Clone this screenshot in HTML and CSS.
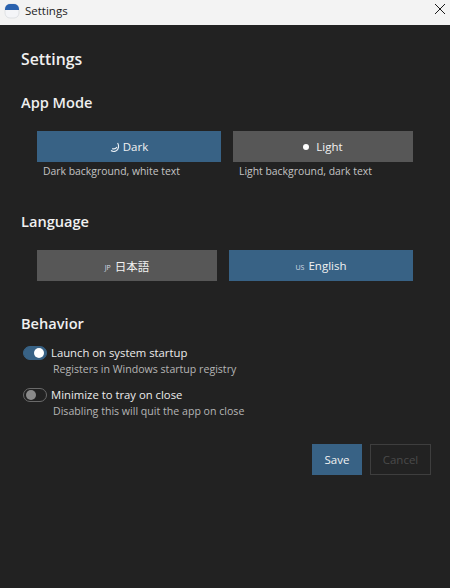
FILE: index.html
```html
<!DOCTYPE html>
<html lang="en">

<head>
    <meta charset="UTF-8">
    <title>Settings</title>
    <link rel="stylesheet" href="styles.css">
</head>

<body>

    <div class="titlebar">
        <svg class="app-icon" width="16" height="16" viewBox="0 0 16 16">
            <rect x="1" y="1" width="14" height="14" rx="5" fill="#f4f5f8" stroke="#c9ccd3" stroke-width="0.5"/>
            <path d="M1 7V6a5 5 0 0 1 5-5h4a5 5 0 0 1 5 5v1z" fill="#2a62ae"/>
        </svg>
        <span class="titlebar-text">Settings</span>
        <svg class="close-icon" width="12" height="12" viewBox="0 0 12 12">
            <path d="M1 1L11 11M11 1L1 11" stroke="#1a1a1a" stroke-width="1" fill="none"/>
        </svg>
    </div>

    <div class="content">
        <h1>Settings</h1>

        <h2 class="mode-title">App Mode</h2>
        <div class="choices mode-choices">
            <div class="choice">
                <button class="btn active"><span class="glyph">
                    <svg width="11" height="11" viewBox="0 0 11 11">
                        <path d="M7.6 1C9.2 3.4 9 7.6 5.8 9 4 9.8 2.4 9.6 1 8.6" stroke="#e8eef4" stroke-width="1.2" fill="none"/>
                        <path d="M2.2 6.6C4.2 7.2 6 6.6 6.9 5" stroke="#e8eef4" stroke-width="1.2" fill="none"/>
                    </svg></span>Dark</button>
                <p class="hint">Dark background, white text</p>
            </div>
            <div class="choice">
                <button class="btn"><span class="sun"></span>Light</button>
                <p class="hint">Light background, dark text</p>
            </div>
        </div>

        <h2 class="lang-title">Language</h2>
        <div class="choices lang-choices">
            <button class="btn"><span class="flag">JP</span>日本語</button>
            <button class="btn active"><span class="flag">US</span>English</button>
        </div>

        <h2 class="behavior-title">Behavior</h2>
        <div class="option">
            <div class="option-row">
                <span class="toggle on"><span class="knob"></span></span>
                <span class="option-label">Launch on system startup</span>
            </div>
            <p class="option-hint">Registers in Windows startup registry</p>
        </div>
        <div class="option option-second">
            <div class="option-row">
                <span class="toggle"><span class="knob"></span></span>
                <span class="option-label">Minimize to tray on close</span>
            </div>
            <p class="option-hint">Disabling this will quit the app on close</p>
        </div>

        <div class="actions">
            <button class="btn active save">Save</button>
            <button class="btn cancel" disabled>Cancel</button>
        </div>
    </div>

</body>

</html>
```

FILE: styles.css
```css
* {
    margin: 0;
    padding: 0;
    box-sizing: border-box;
}

html,
body {
    height: 100%;
}

body {
    display: flex;
    flex-direction: column;
    background-color: #222222;
    color: #f0f0f0;
    font-family: "Open Sans", "Noto Sans CJK JP", sans-serif;
    overflow: hidden;
}

.titlebar {
    display: flex;
    align-items: center;
    height: 25px;
    padding: 0 4px 4px 4px;
    background-color: #f3f3f3;
    color: #1c1c1c;
    font-size: 11.5px;
}

.app-icon {
    margin-right: 5px;
}

.titlebar-text {
    flex: 1;
}

.close-icon {
    margin-top: -3px;
}

.content {
    flex: 1;
    padding: 23px 19px 0 21px;
}

h1 {
    font-size: 15.8px;
    font-weight: 600;
    line-height: 22px;
}

h2 {
    font-size: 14.6px;
    font-weight: 600;
    line-height: 18px;
}

.mode-title {
    margin-top: 23px;
}

.choices {
    display: flex;
    gap: 12px;
    padding-left: 16px;
    width: 392px;
}

.mode-choices {
    margin-top: 20px;
}

.choice:first-child {
    width: 184px;
}

.choice:last-child {
    width: 180px;
}

.btn {
    display: flex;
    align-items: center;
    justify-content: center;
    width: 100%;
    height: 31px;
    border: none;
    background-color: #575757;
    color: #f2f2f2;
    font-family: inherit;
    font-size: 11.5px;
}

.btn.active {
    background-color: #386285;
}

.glyph {
    display: flex;
    margin: 2px 2px 0 0;
}

.sun {
    width: 6px;
    height: 6px;
    margin-right: 7px;
    border-radius: 50%;
    background-color: #ffffff;
}

.hint {
    margin: 2px 0 0 6px;
    font-size: 10.4px;
    line-height: 15px;
    color: #c4c4c4;
}

.lang-title {
    margin-top: 33px;
}

.lang-choices {
    margin-top: 20px;
}

.lang-choices .btn:first-child {
    width: 180px;
}

.lang-choices .btn:last-child {
    width: 184px;
}

.flag {
    margin: 3px 4px 0 0;
    font-size: 7px;
    color: #d5dde5;
}

.behavior-title {
    margin-top: 33px;
}

.option {
    margin: 13px 0 0 2px;
}

.option-second {
    margin-top: 10px;
}

.option-row {
    display: flex;
    align-items: center;
    gap: 4px;
}

.toggle {
    display: flex;
    align-items: center;
    width: 24px;
    height: 14px;
    padding: 0 2px;
    border: 1px solid #6a6a6a;
    border-radius: 7px;
}

.toggle .knob {
    width: 10px;
    height: 10px;
    border-radius: 50%;
    background-color: #8a8a8a;
}

.toggle.on {
    justify-content: flex-end;
    border-color: #386285;
    background-color: #386285;
}

.toggle.on .knob {
    background-color: #ffffff;
}

.option-label {
    font-size: 11.3px;
    line-height: 16px;
    color: #ececec;
}

.option-hint {
    margin: 1px 0 0 30px;
    font-size: 10.6px;
    line-height: 15px;
    color: #b5b5b5;
}

.actions {
    display: flex;
    justify-content: flex-end;
    gap: 8px;
    margin-top: 25px;
}

.save {
    width: 50px;
    font-size: 11.5px;
}

.cancel {
    width: 61px;
    border: 1px solid #3e3e3e;
    background-color: transparent;
    color: #4a4a4a;
}
```
